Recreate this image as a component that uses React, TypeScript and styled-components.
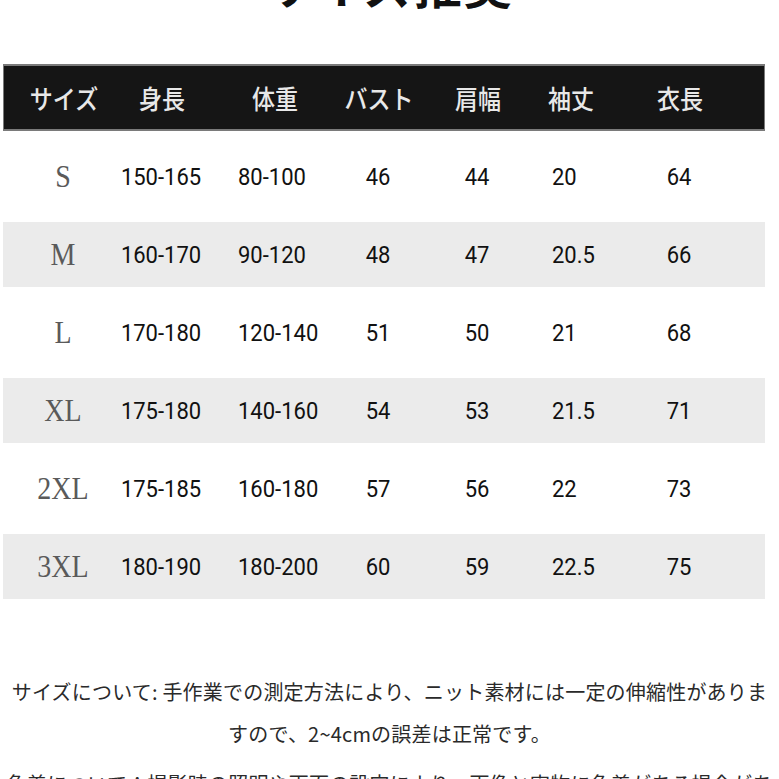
import styled, { createGlobalStyle } from 'styled-components';

const GlobalStyle = createGlobalStyle`
  html, body {
    margin: 0;
    padding: 0;
    background: #ffffff;
    overflow: hidden;
  }
  body {
    font-family: 'Noto Sans CJK JP', 'Noto Sans', sans-serif;
  }
`;

const headers = ['サイズ', '身長', '体重', 'バスト', '肩幅', '袖丈', '衣長'];

const rows = [
  ['S', '150-165', '80-100', '46', '44', '20', '64'],
  ['M', '160-170', '90-120', '48', '47', '20.5', '66'],
  ['L', '170-180', '120-140', '51', '50', '21', '68'],
  ['XL', '175-180', '140-160', '54', '53', '21.5', '71'],
  ['2XL', '175-185', '160-180', '57', '56', '22', '73'],
  ['3XL', '180-190', '180-200', '60', '59', '22.5', '75'],
];

// columns whose numbers start at a fixed left edge instead of being centred
const leftPad: Record<number, number> = { 2: 39, 5: 5 };

function App() {
  return (
    <>
      <GlobalStyle />
      <Page>
        <Title>サイズ推奨</Title>
        <Table>
          <HeadRow>
            {headers.map((h) => (
              <HeadCell key={h}>{h}</HeadCell>
            ))}
          </HeadRow>
          {rows.map((r, i) => (
            <Row key={r[0]} $shaded={i % 2 === 1}>
              <SizeCell>{r[0]}</SizeCell>
              {r.slice(1).map((v, j) => (
                <NumCell key={j} $pad={leftPad[j + 1]}>
                  {v}
                </NumCell>
              ))}
            </Row>
          ))}
        </Table>
        <Notes>
          <NoteLine>サイズについて: 手作業での測定方法により、ニット素材には一定の伸縮性がありま</NoteLine>
          <NoteLine>すので、2~4cmの誤差は正常です。</NoteLine>
          <NoteLine $last>色差について：撮影時の照明や画面の設定により、画像と実物に色差がある場合があ</NoteLine>
        </Notes>
      </Page>
    </>
  );
}

export default App;

const Page = styled.div`
  width: 779px;
  height: 779px;
  overflow: hidden;
  display: flex;
  flex-direction: column;
`;

const Title = styled.h1`
  margin: -41px 0 57px;
  text-align: center;
  font-family: 'Noto Sans CJK JP', sans-serif;
  font-weight: 700;
  font-size: 48px;
  line-height: 48px;
  color: #111;
  letter-spacing: 2px;
`;

const Table = styled.div`
  margin-left: 3px;
  width: 762px;
  display: flex;
  flex-direction: column;
`;

const cols = '120px 76px 150px 58px 140px 46px 172px';

const HeadRow = styled.div`
  display: grid;
  grid-template-columns: ${cols};
  height: 67px;
  box-sizing: border-box;
  align-items: center;
  background: #151515;
  border: 1px solid #7a7a7a;
  border-width: 2px 1px 2px 1px;
`;

const HeadCell = styled.div`
  display: flex;
  justify-content: center;
  white-space: nowrap;
  font-family: 'Noto Sans CJK JP', sans-serif;
  font-weight: 500;
  font-size: 23px;
  color: #e8e8e8;
  transform: scaleY(1.12);
`;

const Row = styled.div<{ $shaded: boolean }>`
  display: grid;
  grid-template-columns: ${cols};
  align-items: center;
  height: ${(p) => (p.$shaded ? 65 : 91)}px;
  background: ${(p) => (p.$shaded ? '#ebebeb' : '#ffffff')};
`;

const SizeCell = styled.div`
  display: flex;
  justify-content: center;
  white-space: nowrap;
  font-family: 'Liberation Serif', serif;
  font-size: 28px;
  color: #5a5a5a;
  transform: scaleY(1.15);
`;

const NumCell = styled.div<{ $pad?: number }>`
  display: flex;
  justify-content: ${(p) => (p.$pad !== undefined ? 'flex-start' : 'center')};
  padding-left: ${(p) => p.$pad ?? 0}px;
  white-space: nowrap;
  font-family: 'Roboto', 'Liberation Sans', sans-serif;
  font-weight: 400;
  font-size: 22px;
  color: #111111;
  transform: scaleY(1.08);
`;

const Notes = styled.div`
  margin-top: 72px;
  display: flex;
  flex-direction: column;
  align-items: center;
`;

const NoteLine = styled.div<{ $last?: boolean }>`
  white-space: nowrap;
  margin-top: ${(p) => (p.$last ? 8 : 0)}px;
  font-family: 'Noto Sans CJK JP', sans-serif;
  font-size: 20px;
  line-height: 42px;
  letter-spacing: 0.2px;
  color: #2a2a2a;
`;
